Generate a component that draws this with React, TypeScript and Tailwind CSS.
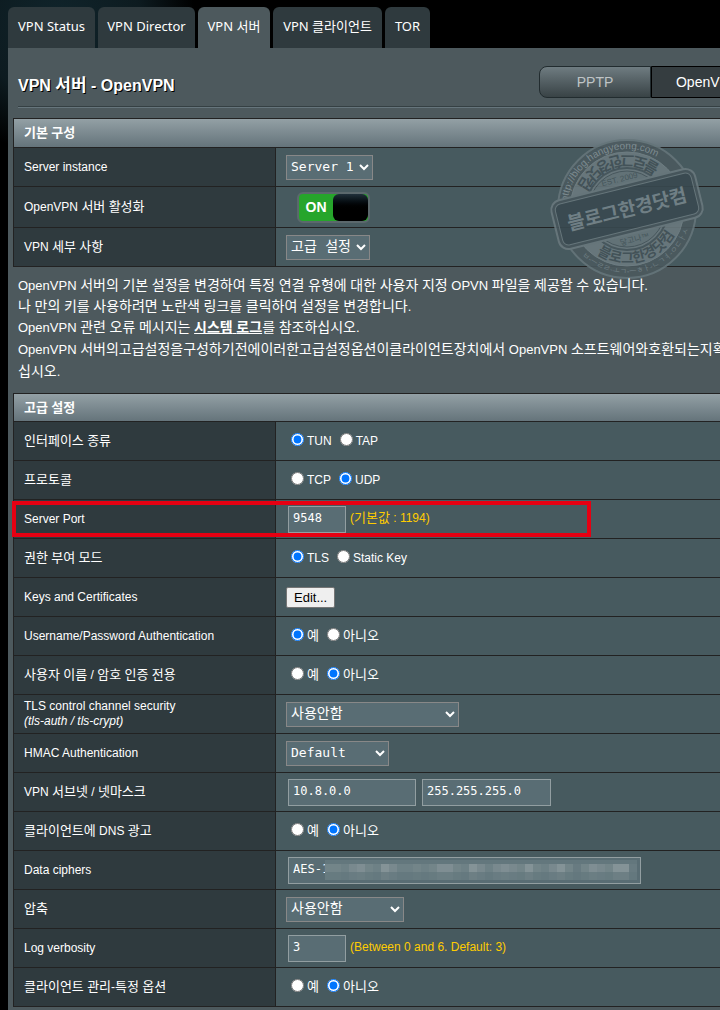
import React, { useState } from "react";
import clsx from "clsx";

const tabs = [
  { name: "VPN Status", width: "w-[87px]" },
  { name: "VPN Director", width: "w-[97px]" },
  { name: "VPN 서버", width: "w-[72px]" },
  { name: "VPN 클라이언트", width: "w-[109px]" },
  { name: "TOR", width: "w-[45px]" },
];

// brightness of each block that hides the cipher list
const maskLevels = [
  3, 3, 2, 4, 5, 3, 2, 6, 4, 2, 2, 3, 2, 3, 5, 5, 3, 2, 6, 4, 2, 4, 5, 4, 3, 6,
  3, 2, 4, 6, 3, 1, 3, 5, 4, 3, 6, 6, 1,
];

// Hangul is set one step larger than the Latin text around it
const Ko = ({
  children,
  size = "text-[13px]",
}: {
  children: string;
  size?: string;
}) => (
  <>
    {children.split(/([\uAC00-\uD7A3]+)/).map((part, i) =>
      i % 2 ? (
        <span key={i} className={clsx(size, "leading-none")}>
          {part}
        </span>
      ) : (
        part
      )
    )}
  </>
);

const Table = ({
  title,
  headClass = "h-7",
  children,
}: {
  title: string;
  headClass?: string;
  children: React.ReactNode;
}) => (
  <table className="w-full border-separate border-spacing-0 border-t border-l border-[#222] text-xs">
    <thead>
      <tr>
        <th
          colSpan={2}
          className={clsx(
            "border-b border-[#222] bg-linear-to-b from-[#93a0a5] to-[#65747b] px-[10px] text-left font-bold",
            headClass
          )}
        >
          <Ko>{title}</Ko>
        </th>
      </tr>
    </thead>
    <tbody>{children}</tbody>
  </table>
);

const Row = ({
  label,
  note,
  htmlFor,
  highlight,
  children,
}: {
  label: string;
  note?: string;
  htmlFor?: string;
  highlight?: boolean;
  children: React.ReactNode;
}) => (
  <tr>
    <th
      scope="row"
      className="relative h-[39px] w-[262px] border-r border-b border-[#222] bg-[#2f3a3e] px-[10px] text-left leading-[15px] font-normal"
    >
      <label htmlFor={htmlFor}>
        <Ko>{label}</Ko>
        {note && <i className="block">{note}</i>}
      </label>
      {highlight && (
        <div className="pointer-events-none absolute top-px -left-[2px] z-10 h-9 w-[579px] border-4 border-[#e60012]" />
      )}
    </th>
    <td className="border-b border-[#222] bg-[#475a5f] pl-[10px]">
      {children}
    </td>
  </tr>
);

const Select = ({
  id,
  value,
  className,
}: {
  id: string;
  value: string;
  className: string;
}) => (
  <select
    id={id}
    className={clsx(
      "block h-[25px] border border-[#888] bg-[#596d74] pb-[2px] font-['DejaVu_Sans_Mono','Noto_Sans_CJK_KR',monospace]",
      className
    )}
  >
    <option>{value}</option>
  </select>
);

const TextBox = ({
  id,
  value,
  label,
  className,
}: {
  id: string;
  value: string;
  label?: string;
  className: string;
}) => (
  <input
    id={id}
    type="text"
    defaultValue={value}
    aria-label={label}
    className={clsx(
      "block h-[27px] border border-[#929ea1] bg-[#596d74] px-1 pb-[2px] font-['DejaVu_Sans_Mono',monospace] text-xs",
      className
    )}
  />
);

const Radios = ({
  name,
  options,
  selected,
}: {
  name: string;
  options: string[];
  selected: number;
}) => (
  <div className="flex items-center gap-2 pl-[5px]">
    {options.map((option, i) => (
      <label key={option} className="flex items-start gap-[3px] leading-4">
        <input
          type="radio"
          name={name}
          defaultChecked={i === selected}
          className="h-[13px] w-[13px]"
        />
        <span>
          <Ko>{option}</Ko>
        </span>
      </label>
    ))}
  </div>
);

const Stamp = () => (
  <svg
    viewBox="-80 -75 160 150"
    className="pointer-events-none absolute top-4 left-[534px] h-[150px] w-[160px] opacity-90"
    aria-hidden="true"
  >
    <defs>
      <path id="outerTop" d="M-60 0A60 60 0 0 1 60 0" />
      <path id="outerBottom" d="M-65 0A65 65 0 0 0 65 0" />
      <path id="innerTop" d="M54 0A54 54 0 0 0 -54 0" />
      <path id="innerBottom" d="M-54 0A54 54 0 0 0 54 0" />
    </defs>
    <circle r="69" fill="#4b595e" stroke="#65757a" strokeWidth="2" />
    <circle r="57" fill="#6b7a7f" stroke="#728186" strokeWidth="1" />
    <circle r="41" fill="#6b7a7f" stroke="#48575d" strokeWidth="2" />
    <circle r="38" fill="#65757a" stroke="#48575d" strokeWidth="1" />
    <g
      fontFamily="'Liberation Sans','Noto Sans CJK KR',sans-serif"
      textAnchor="middle"
    >
      <g transform="rotate(-14)">
        <text fontSize="10" fill="#839196">
          <textPath href="#outerTop" startOffset="43%">
            http://blog.hangyeong.com
          </textPath>
        </text>
        <text fontSize="8" fill="#718085">
          <textPath href="#outerBottom" startOffset="50%">
            ㅂ-ㅡㄹㄹ-ㅗㄱ-ㅡㅎㅏ-ㄴㄱㅕ-ㅇㄷㅏㅅ
          </textPath>
        </text>
        <text fontSize="15" fontWeight="bold" fill="#435258">
          <textPath href="#innerTop" startOffset="50%">
            블로그한경닷컴
          </textPath>
        </text>
        <text fontSize="14" fontWeight="bold" fill="#435258">
          <textPath href="#innerBottom" startOffset="50%">
            블로그한경닷컴
          </textPath>
        </text>
        <text y="-28" fontSize="8" fill="#46555b">
          EST. 2009
        </text>
        <text y="34" fontSize="8" fill="#46555b">
          닿고나™
        </text>
        <rect
          x="-74"
          y="-25"
          width="148"
          height="50"
          rx="10"
          fill="#46555b"
          stroke="#6a797e"
          strokeWidth="2"
        />
        <rect
          x="-70"
          y="-21"
          width="140"
          height="42"
          rx="6"
          fill="#394950"
          stroke="#6a797e"
          strokeWidth="1"
        />
        <text y="7" fontSize="19" fontWeight="bold" fill="#75848a">
          블로그한경닷컴
        </text>
      </g>
    </g>
  </svg>
);

const App = () => {
  const [enabled, setEnabled] = useState(true);

  return (
    <div className="overflow-hidden bg-black bg-[radial-gradient(circle_at_60px_20px,#10242b_0px,#0d1b20_80px,#000_135px)] bg-no-repeat pt-[7px] pl-2 font-['Liberation_Sans','Noto_Sans_CJK_KR',sans-serif] text-white">
      <div className="min-w-[756px]">
        <nav className="flex gap-[3px] font-['Noto_Sans','Noto_Sans_CJK_KR',sans-serif] text-[13px]">
          {tabs.map(({ name, width }) => (
            <a
              key={name}
              href="#"
              className={clsx(
                "flex h-[41px] items-center justify-center rounded-t-md pb-[2px] whitespace-nowrap",
                width,
                name === "VPN 서버" ? "bg-[#4d595d]" : "bg-[#2f3a3e]"
              )}
            >
              {name}
            </a>
          ))}
        </nav>

        <main className="bg-[#4d595d] pt-[18px] pb-1 pl-[5px]">
          <header className="ml-[5px] flex items-center justify-between border-b border-[#354043] pb-2 shadow-[0_1px_0_#66757c]">
            <h1 className="pt-2 text-base leading-6 font-bold [text-shadow:1px_1px_0_#000]">
              <Ko size="text-[17px]">VPN 서버 - OpenVPN</Ko>
            </h1>
            <div className="flex h-8 text-sm">
              <button className="w-28 rounded-l-lg border border-[#222c2f] bg-linear-to-b from-[#6f7c81] to-[#394346] text-[#bfc4c6]">
                PPTP
              </button>
              <button className="w-[113px] rounded-r-lg border border-black bg-[#353d40]">
                OpenVPN
              </button>
            </div>
          </header>

          <div className="relative mt-[11px]">
            <Table title="기본 구성" headClass="h-[29px]">
              <Row label="Server instance" htmlFor="instance">
                <Select
                  id="instance"
                  value="Server 1"
                  className="w-[87px] text-[13px]"
                />
              </Row>
              <Row label="OpenVPN 서버 활성화" htmlFor="enable">
                <div className="flex h-10 items-center pl-[11px]">
                  <button
                    id="enable"
                    role="switch"
                    aria-checked={enabled}
                    onClick={() => setEnabled(!enabled)}
                    className={clsx(
                      "flex h-[31px] w-[73px] items-center rounded-md border-2 border-[#5b686c] text-sm font-bold",
                      enabled ? "bg-[#26a52b]" : "flex-row-reverse bg-[#555]"
                    )}
                  >
                    <span className="flex-1 text-center">
                      {enabled ? "ON" : "OFF"}
                    </span>
                    <span className="h-[27px] w-[35px] rounded-md bg-linear-to-b from-[#20303a] to-black to-60%" />
                  </button>
                </div>
              </Row>
              <Row label="VPN 세부 사항" htmlFor="detail">
                <Select
                  id="detail"
                  value="고급 설정"
                  className="w-[84px] text-sm"
                />
              </Row>
            </Table>
            <Stamp />
          </div>

          <div className="relative mt-2 mb-[10px] pl-[5px] text-[13px] leading-[22px] whitespace-nowrap">
            <p className="leading-[21px]">
              <Ko size="text-sm">
                OpenVPN 서버의 기본 설정을 변경하여 특정 연결 유형에 대한 사용자
                지정 OPVN 파일을 제공할 수 있습니다.
              </Ko>
            </p>
            <p className="leading-[21px]">
              <Ko size="text-sm">
                나 만의 키를 사용하려면 노란색 링크를 클릭하여 설정을
                변경합니다.
              </Ko>
            </p>
            <p>
              <Ko size="text-sm">OpenVPN 관련 오류 메시지는 </Ko>
              <a href="#" className="font-bold underline">
                <Ko size="text-sm">시스템 로그</Ko>
              </a>
              <Ko size="text-sm">를 참조하십시오.</Ko>
            </p>
            <p>
              <Ko size="text-sm">
                OpenVPN 서버의고급설정을구성하기전에이러한고급설정옵션이클라이언트장치에서
                OpenVPN 소프트웨어와호환되는지확
              </Ko>
            </p>
            <p>
              <Ko size="text-sm">십시오.</Ko>
            </p>
          </div>

          <Table title="고급 설정">
            <Row label="인터페이스 종류">
              <Radios name="iface" options={["TUN", "TAP"]} selected={0} />
            </Row>
            <Row label="프로토콜">
              <Radios name="proto" options={["TCP", "UDP"]} selected={1} />
            </Row>
            <Row label="Server Port" htmlFor="port" highlight>
              <div className="flex gap-1 pl-[2px]">
                <TextBox id="port" value="9548" className="w-[58px]" />
                <span className="pt-1 text-[#fc0]">
                  <Ko>(기본값 : 1194)</Ko>
                </span>
              </div>
            </Row>
            <Row label="권한 부여 모드">
              <Radios name="auth" options={["TLS", "Static Key"]} selected={0} />
            </Row>
            <Row label="Keys and Certificates">
              <button className="block h-[21px] rounded-xs border border-[#767676] bg-[#efefef] px-[7px] text-[13px] leading-none text-black">
                Edit...
              </button>
            </Row>
            <Row label="Username/Password Authentication">
              <Radios name="userpass" options={["예", "아니오"]} selected={0} />
            </Row>
            <Row label="사용자 이름 / 암호 인증 전용">
              <Radios name="useronly" options={["예", "아니오"]} selected={1} />
            </Row>
            <Row
              label="TLS control channel security"
              note="(tls-auth / tls-crypt)"
              htmlFor="tls"
            >
              <Select id="tls" value="사용안함" className="w-[173px] text-sm" />
            </Row>
            <Row label="HMAC Authentication" htmlFor="hmac">
              <Select
                id="hmac"
                value="Default"
                className="w-[103px] text-[13px]"
              />
            </Row>
            <Row label="VPN 서브넷 / 넷마스크" htmlFor="subnet">
              <div className="flex gap-[6px] pl-[2px]">
                <TextBox id="subnet" value="10.8.0.0" className="w-32" />
                <TextBox
                  id="netmask"
                  label="넷마스크"
                  value="255.255.255.0"
                  className="w-[129px]"
                />
              </div>
            </Row>
            <Row label="클라이언트에 DNS 광고">
              <Radios name="dns" options={["예", "아니오"]} selected={1} />
            </Row>
            <Row label="Data ciphers" htmlFor="ciphers">
              <div className="relative ml-[2px] w-[353px]">
                <TextBox id="ciphers" value="AES-1" className="w-full" />
                <div className="absolute top-[3px] left-[37px] flex h-5 w-[312px] bg-[#63777d]">
                  {maskLevels.map((level, i) => (
                    <span key={i} className="flex flex-1 flex-col pt-1">
                      <span
                        className="h-2 bg-[#a5afb1]"
                        style={{ opacity: level / 12 }}
                      />
                      <span
                        className="h-2 bg-[#a5afb1]"
                        style={{ opacity: level / 40 }}
                      />
                    </span>
                  ))}
                </div>
              </div>
            </Row>
            <Row label="압축" htmlFor="compression">
              <Select
                id="compression"
                value="사용안함"
                className="w-[118px] text-sm"
              />
            </Row>
            <Row label="Log verbosity" htmlFor="verbosity">
              <div className="flex gap-1 pl-[2px]">
                <TextBox id="verbosity" value="3" className="w-[58px]" />
                <span className="pt-1 text-[#fc0]">
                  (Between 0 and 6. Default: 3)
                </span>
              </div>
            </Row>
            <Row label="클라이언트 관리-특정 옵션">
              <Radios name="ccd" options={["예", "아니오"]} selected={1} />
            </Row>
          </Table>
        </main>
      </div>
    </div>
  );
};

export default App;
